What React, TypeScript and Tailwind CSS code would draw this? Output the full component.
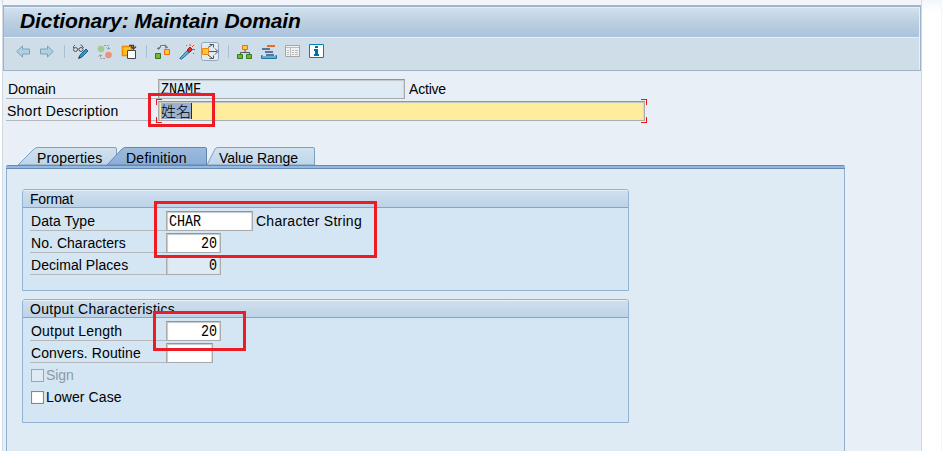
import type { ReactNode } from "react";

const inset = "border border-[#a9abad] border-t-[#8e959b] shadow-[inset_1px_1px_1px_#c4c8cc,inset_-1px_0_1px_#d4d6d8]";

function Value({ children }: { children: string }) {
  return <span className="inline-block origin-[50%_75%] scale-y-[1.2] font-['Liberation_Mono',monospace] text-[13.4px] leading-[19px]">{children}</span>;
}

function Row({ label, spacing, children, width = "w-[136px]" }: { label: string; spacing: string; children?: ReactNode; width?: string }) {
  return (
    <div className="flex h-[22px] items-start">
      <div className={`h-[20px] shrink-0 border-b border-[#b4b6b9] leading-[21px] ${width} ${spacing}`}>{label}</div>
      {children}
    </div>
  );
}

function Group({ title, spacing, height, children }: { title: string; spacing: string; height: string; children: ReactNode }) {
  return (
    <section className={`w-[607px] rounded-t-[3px] border border-[#93b3d3] bg-[#d4e6f3] ${height}`}>
      <h2 className={`h-[18px] rounded-t-[2px] border-b border-t border-b-[#84a6c6] border-t-[#e6eff7] bg-linear-to-b from-[#cfdfee] to-[#bdd3e8] pl-[7px] leading-[16px] ${spacing}`}>{title}</h2>
      <div className="pl-[7px] pt-[3px]">{children}</div>
    </section>
  );
}

function Separator() {
  return <i className="mx-[7px] h-[13px] w-px bg-[#a6c0d6]" />;
}

function Arrow({ flip = false }: { flip?: boolean }) {
  return (
    <svg width="14" height="13" viewBox="0 0 14 13" className={flip ? "-scale-x-100" : ""}>
      <path d="M.7 6.500 6.500 1v3H13.500v5H6.500v3Z" fill="#b3cfdf" stroke="#74a5be" />
    </svg>
  );
}

function Toolbar() {
  return (
    <div className="flex h-[32px] items-center bg-[#cfdde8] pb-[5px] pl-[12px]">
      <Arrow />
      <span className="w-[10px]" />
      <Arrow flip />
      <span className="w-[3px]" />
      <Separator />
      <svg width="17" height="16" viewBox="0 0 17 16" fill="none">
        <path d="M1.500 4V2.500L3 1M8.500 1h1L11.500 4M5.500 5h1" stroke="#555" />
        <circle cx="3.500" cy="5.500" r="2" stroke="#555" /><circle cx="9" cy="5.500" r="2" stroke="#555" />
        <path d="m7 14 1-3 6-6 2 2-6 6Z" fill="#3b92bd" stroke="#17658f" /><path d="m6 15 1-3 2 2Z" fill="#444" />
      </svg>
      <svg className="ml-[8px]" width="16" height="16" viewBox="0 0 16 16" fill="none">
        <circle cx="4" cy="5" r="3.300" fill="#a0cb94" /><circle cx="11.500" cy="11" r="3.300" fill="#e9957d" />
        <path d="M7 1.500h4.500V5M9.500 3.500l2 2 2-2M8 14.500H3.500V11M1.500 12.500l2-2 2 2" stroke="#9b9b9b" strokeDasharray="2 1" />
      </svg>
      <svg className="ml-[8px]" width="16" height="16" viewBox="0 0 16 16">
        <path d="M1.500 2.500h9v9h-9Z" fill="#ffc21d" stroke="#ee8900" strokeWidth="1.500" />
        <path d="M6.500 6.500h8v8h-8Z" fill="#fff" stroke="#444" />
        <path d="M8 1.500h4.500V4M10 2.500l2.500 2.500L15 2.500" fill="none" stroke="#444" strokeWidth="1.300" />
      </svg>
      <span className="w-[2px]" />
      <Separator />
      <svg className="ml-px" width="16" height="16" viewBox="0 0 16 16">
        <path d="M3.500 6V3.500h2v-2h5v2h2M2 4.500h3M10 .5l2.500 3L10 4" fill="none" stroke="#777" />
        <path d="M.5 9.500h5v5h-5Z" fill="#75b82a" stroke="#347a25" /><path d="M9.500 5.500h5v5h-5Z" fill="#ffc933" stroke="#ee6d19" />
      </svg>
      <svg className="ml-[8px]" width="16" height="16" viewBox="0 0 16 16">
        <path d="m.7 14.500 7-7.500 2 2-7 6Z" fill="#69b5d6" stroke="#236e99" /><path d="m8 6 3-3 2.500 2.500-3 3Z" fill="#e32a25" stroke="#7f2430" />
        <path d="M7 1l1 1M11 0v2M15 1l-2 2M14 5.500h2M14 9l1 1" stroke="#ed4b1c" />
      </svg>
      <svg className="ml-[6px]" width="18" height="19" viewBox="0 0 18 19">
        <rect x=".5" y=".5" width="17" height="18" rx="2" fill="#e3ebf2" stroke="#8fa8bf" />
        <path d="M7 5.500 11 3M7 13l4 3M8 9.500h8M14 6.500l3 3-3 3M8.500 2.500h4v3M8.500 16.500h4v-3" stroke="#555" fill="none" />
        <path d="M1.500 6.500h6v6h-6Z" fill="#ffc933" stroke="#f08517" />
      </svg>
      <span className="w-[2px]" />
      <Separator />
      <svg className="ml-px" width="16" height="16" viewBox="0 0 16 16">
        <path d="M8 6v2M3.500 11V8.500h9V11" fill="none" stroke="#555" />
        <path d="M5.500 1.500h5v4h-5Z" fill="#ffc933" stroke="#ee6d19" />
        <path d="M.5 10.500h5v4h-5ZM9.500 10.500h5v4h-5Z" fill="#75b82a" stroke="#347a25" />
      </svg>
      <svg className="ml-[8px]" width="17" height="16" viewBox="0 0 17 16">
        <path d="M6 2h8" stroke="#ed6a24" strokeWidth="2" /><path d="M1 5h8M4 8h8M5 11h8" stroke="#305481" strokeWidth="1.700" />
        <path d="M1.500 11.500h-1v3h15v-3h-1M1 13h14" fill="none" stroke="#1976a5" />
      </svg>
      <svg className="ml-[7px]" width="16" height="13" viewBox="0 0 16 13">
        <path d="M.5.5h14v11H.5Z" fill="#f1f1f1" stroke="#a6a6a6" />
        <path d="M1 2.500h13M5.500 3v8M2 5.500h2M2 7.500h2M2 9.500h2M7 5.500h2M10 5.500h3M7 7.500h2M10 7.500h3M7 9.500h2M10 9.500h3" stroke="#bbb" />
      </svg>
      <svg className="ml-[8px]" width="16" height="15" viewBox="0 0 16 15">
        <path d="M.5.5h14v13H.5Z" fill="#fff" stroke="#0080bb" />
        <path d="M6 2h3v2H6ZM5 5h4v5h1v2H5v-2h1V7H5Z" fill="#006fa9" />
      </svg>
    </div>
  );
}

function Tabs() {
  return (
    <nav className="relative h-[18px] w-[320px]">
      <svg width="320" height="18" viewBox="0 0 320 18" className="block">
        <defs>
          <linearGradient id="tab" x2="0" y2="1"><stop stopColor="#d2e2ef" /><stop offset="1" stopColor="#bdd5e9" /></linearGradient>
          <linearGradient id="active" x2="0" y2="1"><stop stopColor="#9dbbdd" /><stop offset="1" stopColor="#8badd7" /></linearGradient>
        </defs>
        <path d="M12 18 28 2Q29.500.5 32 .5H109Q110.500.5 110.500 2V18Z" fill="url(#tab)" stroke="#7e9fbe" />
        <path d="M201 18 209 2Q210 .5 212 .5H307Q308.500.5 308.500 2V18Z" fill="url(#tab)" stroke="#7e9fbe" />
        <path d="M101 18 116 2Q117.500.5 120 .5H199Q200.500.5 200.500 2V18Z" fill="url(#active)" stroke="#6486ad" />
      </svg>
      <span className="absolute left-[31px] top-[2px] leading-[18px] tracking-[0.15px]">Properties</span>
      <span className="absolute left-[120px] top-[2px] leading-[18px] tracking-[0.25px]">Definition</span>
      <span className="absolute left-[213px] top-[2px] leading-[18px] tracking-[-0.1px]">Value Range</span>
    </nav>
  );
}

export default function App() {
  return (
    <div className="relative flex h-[451px] w-[942px] overflow-hidden whitespace-nowrap bg-linear-to-b from-[#f2f6fb] to-white to-[12px] font-['Liberation_Sans',sans-serif] text-[14px] text-black">
      <main className="ml-[2px] flex w-[920px] shrink-0 flex-col border-x border-[#d0d9e4] bg-[#e8eff6]">
        <div className="h-[5px] bg-[#f2f5fa]" />
        <header className="h-[66px] w-[918px] shrink-0 border border-t-2 border-[#9fb3c9] border-t-[#a3b5c8] pr-px">
          <h1 className="h-[30px] border-t border-[#e2edf5] bg-linear-to-b from-[#d0e1ef] via-[#bbcfdf] to-[#abc3df] pl-[16px] text-[21px] leading-[26px] font-bold italic tracking-[-0.1px]">Dictionary: Maintain Domain</h1>
          <div className="h-px bg-[#e6eff7]" />
          <Toolbar />
        </header>

        <div className="pl-[3px] pt-[8px]">
          <Row label="Domain" spacing="pl-[2px] tracking-[-0.1px]" width="w-[152px]">
            <div className={`h-[20px] w-[247px] bg-[#deebf4] pl-[2px] leading-[19px] ${inset}`}><Value>ZNAME</Value></div>
            <span className="pl-[4px] leading-[21px] tracking-[-0.2px]">Active</span>
          </Row>
          <Row label="Short Description" spacing="pl-px tracking-[0.25px]" width="w-[152px]">
            <div className={`relative h-[20px] w-[487px] bg-[#feed9d] pl-[2px] pt-px ${inset}`}>
              <span className="inline-block h-[16px] w-[31px] border-r border-[#252b35] bg-[#9bb1d1] align-top font-['Noto_Sans_CJK_JP',sans-serif] text-[15px] leading-[15px] font-light">姓名</span>
              <i className="absolute -left-[3px] -top-[3px] size-[6px] border-l border-t border-[#ee1717]" />
              <i className="absolute -bottom-[3px] -left-[3px] size-[6px] border-b border-l border-[#ee1717]" />
              <i className="absolute -right-[3px] -top-[3px] size-[6px] border-r border-t border-[#ee1717]" />
              <i className="absolute -bottom-[3px] -right-[3px] size-[6px] border-b border-r border-[#ee1717]" />
            </div>
          </Row>
        </div>

        <div className="ml-[3px] mt-[24px]"><Tabs /></div>
        <div className="ml-[3px] h-[4px] w-[839px] shrink-0 rounded-t-[2px] border-y border-[#638bb6] bg-[#97b8dd]" />
        <div className="ml-[3px] flex w-[839px] flex-1 flex-col gap-[8px] border-x border-[#91b1d1] bg-[#deebf4] pl-[15px] pt-[20px]">
          <Group title="Format" spacing="tracking-[-0.2px]" height="h-[102px]">
            <Row label="Data Type" spacing="pl-px tracking-[0.05px]">
              <div className={`h-[20px] w-[87px] bg-white pl-[2px] leading-[19px] ${inset}`}><Value>CHAR</Value></div>
              <span className="pl-[3px] leading-[21px] tracking-[0.25px]">Character String</span>
            </Row>
            <Row label="No. Characters" spacing="pl-px tracking-[0.05px]">
              <div className={`h-[20px] w-[55px] bg-white pr-[3px] text-right leading-[19px] ${inset}`}><Value>20</Value></div>
            </Row>
            <Row label="Decimal Places" spacing="pl-px tracking-[0.05px]">
              <div className={`h-[20px] w-[55px] bg-[#deebf4] pr-[3px] text-right leading-[19px] ${inset}`}><Value>0</Value></div>
            </Row>
          </Group>
          <Group title="Output Characteristics" spacing="tracking-[0.3px]" height="h-[124px]">
            <Row label="Output Length" spacing="pl-px tracking-[0.2px]">
              <div className={`h-[20px] w-[55px] bg-white pr-[3px] text-right leading-[19px] ${inset}`}><Value>20</Value></div>
            </Row>
            <Row label="Convers. Routine" spacing="pl-px tracking-[0.1px]">
              <div className={`h-[20px] w-[47px] bg-white ${inset}`} />
            </Row>
            <div className="flex h-[22px] items-center pl-px pb-px text-[#8d9aa5] tracking-[-0.1px]">
              <i className="mr-[2px] size-[13px] border border-[#9aa7b2] bg-[#deebf4]" />Sign
            </div>
            <div className="flex h-[22px] items-center pl-px pb-px tracking-[0.1px]">
              <i className="mr-[2px] size-[13px] border border-[#888] bg-white shadow-[inset_0_0_1px_#aaa]" />Lower Case
            </div>
          </Group>
        </div>
      </main>
      <div className="ml-auto w-px bg-[#f3f5f8]" />
      <i className="absolute left-[148px] top-[93px] h-[34px] w-[67px] border-3 border-[#ed1c24]" />
      <i className="absolute left-[154px] top-[201px] h-[57px] w-[223px] border-3 border-[#ed1c24]" />
      <i className="absolute left-[153px] top-[311px] h-[40px] w-[93px] border-3 border-[#ed1c24]" />
    </div>
  );
}
